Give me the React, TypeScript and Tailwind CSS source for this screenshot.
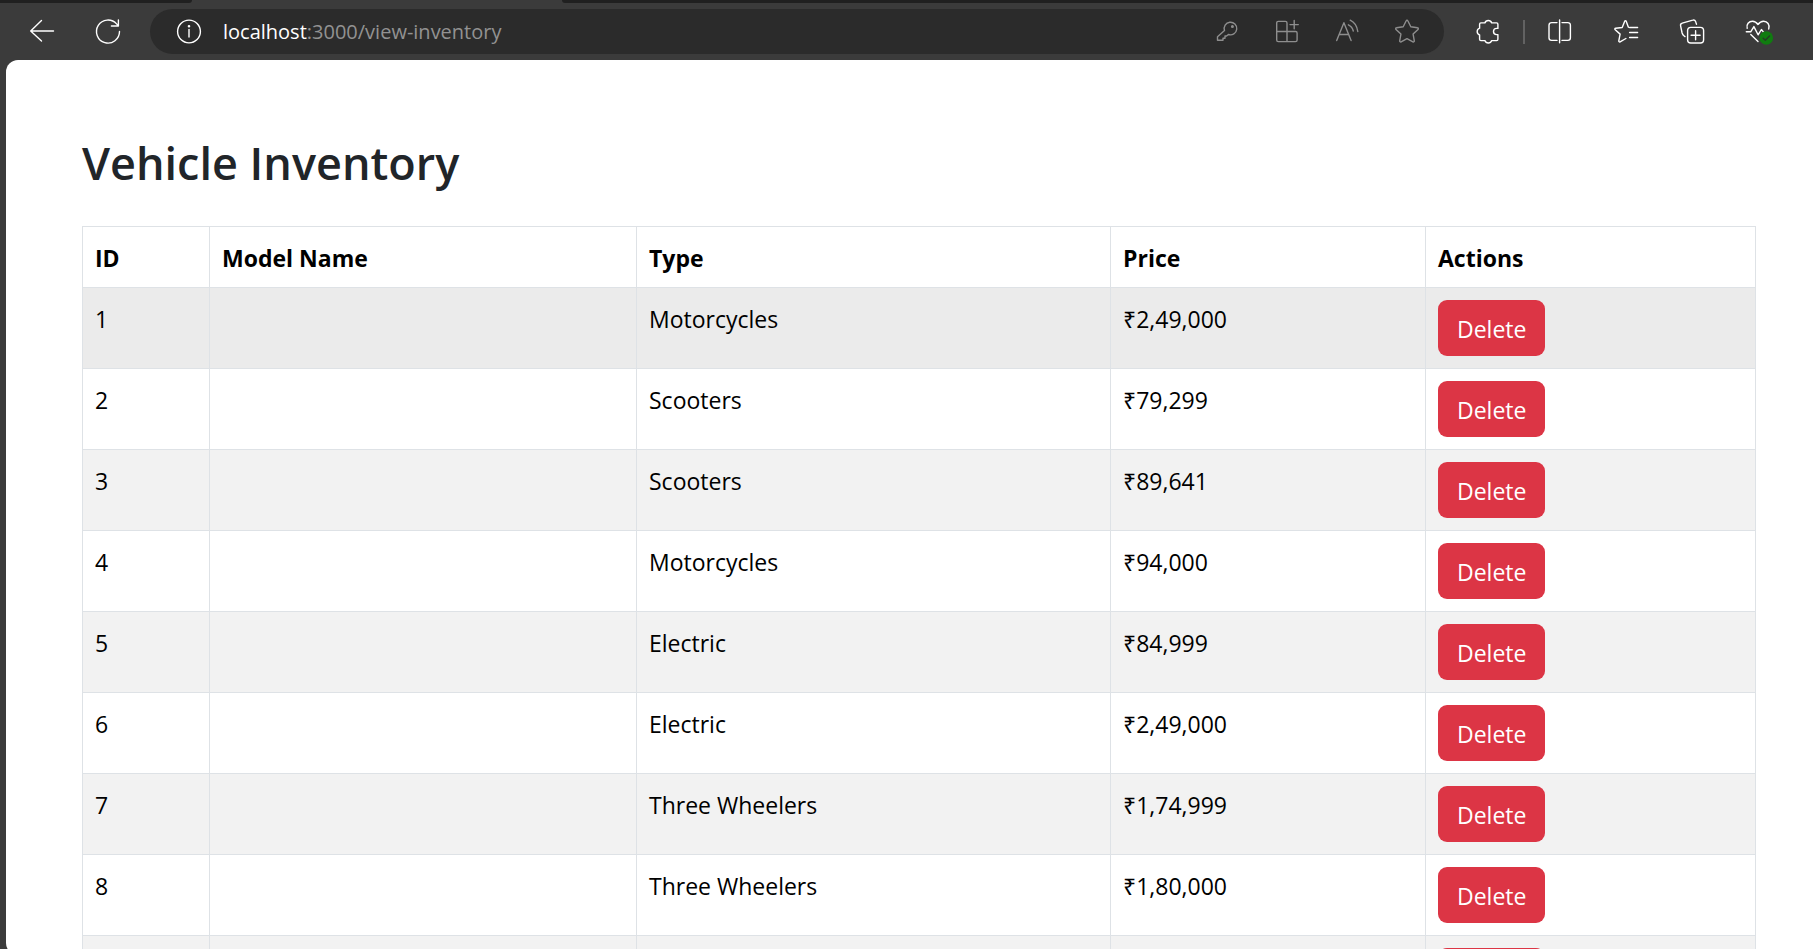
import type { ReactNode } from 'react';

type Vehicle = { id: number; model: string; type: string; price: string };

const vehicles: Vehicle[] = [
  { id: 1, model: '', type: 'Motorcycles', price: '₹2,49,000' },
  { id: 2, model: '', type: 'Scooters', price: '₹79,299' },
  { id: 3, model: '', type: 'Scooters', price: '₹89,641' },
  { id: 4, model: '', type: 'Motorcycles', price: '₹94,000' },
  { id: 5, model: '', type: 'Electric', price: '₹84,999' },
  { id: 6, model: '', type: 'Electric', price: '₹2,49,000' },
  { id: 7, model: '', type: 'Three Wheelers', price: '₹1,74,999' },
  { id: 8, model: '', type: 'Three Wheelers', price: '₹1,80,000' },
  { id: 9, model: '', type: '', price: '' },
];

function IconButton({ label, children }: { label: string; children: ReactNode }) {
  return (
    <button type="button" aria-label={label} className="flex h-[45px] w-12 shrink-0 items-center justify-center">
      <svg
        viewBox="0 0 24 25"
        className="h-[25px] w-6 overflow-visible"
        fill="none"
        stroke="currentColor"
        strokeWidth="1.4"
        strokeLinecap="round"
        strokeLinejoin="round"
        aria-hidden="true"
      >
        {children}
      </svg>
    </button>
  );
}

function Toolbar() {
  return (
    <header className="flex items-center pt-1.5 pr-[31px] pb-1.5 pl-[18px] text-white">
      <div className="flex gap-[18px] pr-[18px]">
        <IconButton label="Back">
          <path d="M23.5 12H.7M11.5 1.5.7 12l10.8 10" />
        </IconButton>
        <IconButton label="Refresh">
          <path d="M23.5 12.5A11.5 11.5 0 1 1 20.6 4.9L22.4 7M22.4 1v6h-7" />
        </IconButton>
      </div>
      <div className="flex min-w-0 flex-1 items-center rounded-full bg-[#2b2b2b] pr-[13px] pl-[15px]">
        <IconButton label="Site information">
          <circle cx="12" cy="12.5" r="11.4" />
          <path d="M12 10.5v7.5" />
          <circle cx="12" cy="7.3" r=".6" fill="currentColor" />
        </IconButton>
        <a href="/view-inventory" className="ml-2.5 min-w-0 flex-1 truncate text-[20px] leading-[30px] text-[#929292]">
          <span className="text-white">localhost</span>:3000/view-inventory
        </a>
        <div className="flex gap-3 text-[#8e8e8e]">
          <IconButton label="Saved passwords">
            <path d="M9.5 11.6a6.3 6.3 0 1 1 3.9 3.9L11.6 17H10v2.2H8v2H2.5v-3.4z" />
            <circle cx="17.4" cy="7.5" r=".8" fill="currentColor" />
          </IconButton>
          <IconButton label="Apps">
            <path d="M12 12.5V4a1.6 1.6 0 0 0-1.6-1.6H3.3A1.6 1.6 0 0 0 1.7 4v17a1.6 1.6 0 0 0 1.6 1.6h17.2a1.6 1.6 0 0 0 1.6-1.6v-7a1.5 1.5 0 0 0-1.5-1.5H1.7M12 12.5v10M19.2 1.5v8.2M15 5.6h8.3" />
          </IconButton>
          <IconButton label="Read aloud">
            <path d="m1.7 21.5 7.2-17.8 7.2 17.8M4.3 15.5h9.3M13.4 5.8c2.6 1.2 4.2 3.3 4.9 6.2M15.2 1.2c4.3 2 6.8 6 7.6 11.3" />
          </IconButton>
          <IconButton label="Add to favorites">
            <path d="M11.2 1.8c.3-.7 1.3-.7 1.6 0l3 6 6.7 1c.8.1 1.1 1.1.5 1.6l-4.9 4.7 1.2 6.7c.1.8-.7 1.4-1.4 1L12 19.7l-5.9 3.1c-.7.4-1.5-.2-1.4-1l1.2-6.7L1 10.4c-.6-.5-.3-1.5.5-1.6l6.7-1z" />
          </IconButton>
        </div>
      </div>
      <div className="flex items-center gap-[18px] pl-5">
        <div className="flex items-center gap-[11px]">
          <IconButton label="Extensions">
            <path d="M3.6 5.2a1.3 1.3 0 0 1 1.3-1.3h4a3.6 3.6 0 0 1 6.8 0h4.9A1.3 1.3 0 0 1 21.9 5.2v4.2h-1.3a3.1 3.1 0 0 0 0 6.2h1.3v4.7a1.3 1.3 0 0 1-1.3 1.3h-4.9a3.6 3.6 0 0 1-6.8 0h-4a1.3 1.3 0 0 1-1.3-1.3V16a3.6 3.6 0 0 1 0-6.8z" />
          </IconButton>
          <span className="h-6 w-0.5 bg-[#626262]" />
          <IconButton label="Split screen">
            <path d="M9 3.6H3.6A2.6 2.6 0 0 0 1 6.2v12.6a2.6 2.6 0 0 0 2.6 2.6H9M14 3.6h5.8a2.6 2.6 0 0 1 2.6 2.6v12.6a2.6 2.6 0 0 1-2.6 2.6H14M11.6 1v22.8" />
          </IconButton>
        </div>
        <IconButton label="Favorites">
          <path d="M15.6 8.5h8M15.6 13.5h8M15.6 18.5h8M14.4 8.2l-2.2-6c-.3-.8-1.2-.8-1.5 0L8.2 8.5l-6.5.7c-.9.1-1.2 1-.5 1.6l4.9 4.3-1.3 6.8c-.1.8.6 1.3 1.3.9l5.8-3.3" />
        </IconButton>
        <IconButton label="Collections">
          <rect x="7.6" y="8.4" width="16" height="15.6" rx="3.2" />
          <path d="M15.6 11.8v9M11.1 16.3h9M5 17.6 4.2 17C3 16.2 2.5 15.3 2.1 14L.6 6.8C.3 5.5.9 4.5 2.2 4.2L12.8 1.2c1.3-.4 2.3.2 2.8 1.4l.9 2.7" />
        </IconButton>
        <IconButton label="Browser essentials">
          <path d="M1.2 9.3C0 5.3 3 2.2 6.4 2.2c2.5 0 4.3 1.4 5.6 3.3 1.3-1.9 3.1-3.3 5.6-3.3 3.7 0 6.6 3.5 5.1 7.8M4.8 15.5l7.2 7M.3 12.8h4.4l3.2-5.2 4.2 8.2 3.3-5.3 2.1 2.6" />
          <circle cx="20.3" cy="19" r="6.8" fill="#107c10" stroke="none" />
          <path d="m17.2 19.2 2.1 2.1 4.2-4.3" stroke="#263c26" />
        </IconButton>
      </div>
    </header>
  );
}

function InventoryTable() {
  const cell = 'border border-[#dee2e6] px-3 pt-3';
  return (
    <table className="w-full table-fixed border-collapse text-left align-top text-[23px] leading-[38px] text-black">
      <colgroup>
        <col className="w-[127px]" />
        <col className="w-[427px]" />
        <col className="w-[474px]" />
        <col className="w-[315px]" />
        <col className="w-[330px]" />
      </colgroup>
      <thead>
        <tr>
          {['ID', 'Model Name', 'Type', 'Price', 'Actions'].map((title) => (
            <th key={title} scope="col" className={`${cell} pb-2.5 font-bold`}>
              {title}
            </th>
          ))}
        </tr>
      </thead>
      <tbody>
        {vehicles.map((vehicle, index) => (
          <tr
            key={vehicle.id}
            className={`align-top ${index === 0 ? 'bg-[#ebebeb]' : index % 2 === 0 ? 'bg-[#f2f2f2]' : 'bg-white'}`}
          >
            <td className={cell}>{vehicle.id}</td>
            <td className={cell}>{vehicle.model}</td>
            <td className={cell}>{vehicle.type}</td>
            <td className={cell}>{vehicle.price}</td>
            <td className={`${cell} pb-3`}>
              <button type="button" className="block rounded-[9px] bg-[#dc3545] px-[19px] pt-2.5 pb-2 text-white">
                Delete
              </button>
            </td>
          </tr>
        ))}
      </tbody>
    </table>
  );
}

export default function App() {
  return (
    <div className="flex h-screen flex-col overflow-hidden bg-[#3b3b3b] font-['Open_Sans','Noto_Sans',sans-serif]">
      <div className="flex h-[3px] shrink-0 gap-[370px]">
        <div className="w-48 rounded-br-[3px] bg-[#202020]" />
        <div className="flex-1 rounded-bl-[3px] bg-[#202020]" />
      </div>
      <Toolbar />
      <main className="-mb-1.5 ml-1.5 min-h-0 flex-1 overflow-hidden rounded-l-xl bg-white pt-[74px] pr-[57px] pl-[76px]">
        <h1 className="mb-[34px] text-[45px] leading-[58px] font-semibold text-[#212529]">Vehicle Inventory</h1>
        <InventoryTable />
      </main>
    </div>
  );
}
